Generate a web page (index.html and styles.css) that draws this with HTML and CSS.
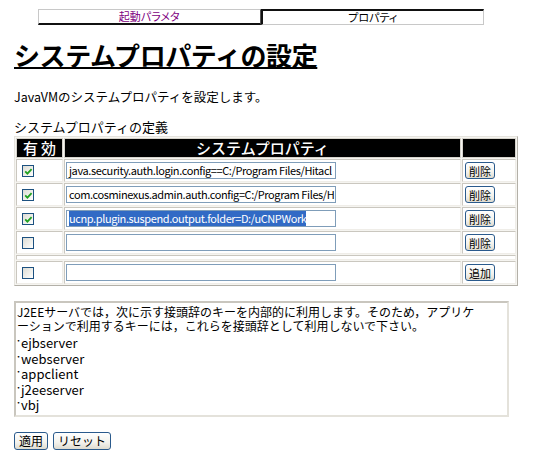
FILE: index.html
```html
<!DOCTYPE html>
<html lang="ja">
<head>
<meta charset="utf-8">
<title>システムプロパティの設定</title>
<link rel="stylesheet" href="styles.css">
</head>
<body>
<div class="page">
  <div class="tabs">
    <div class="tab tab-off">起動パラメタ</div>
    <div class="tab tab-on">プロパティ</div>
  </div>

  <h1 class="title"><span>システムプロパティの設定</span></h1>

  <p class="lead">JavaVMのシステムプロパティを設定します。</p>

  <div class="caption">システムプロパティの定義</div>

  <table class="props">
    <thead>
      <tr>
        <th class="c1 h-valid">有効</th>
        <th class="c2">システムプロパティ</th>
        <th class="c3"></th>
      </tr>
    </thead>
    <tbody>
      <tr>
        <td class="c1"><span class="cb"><svg viewBox="0 0 11 11" width="11" height="11"><path d="M2.2 5.4 L4.4 7.6 L8.6 3.2" fill="none" stroke="#21a121" stroke-width="1.8"/></svg></span></td>
        <td class="c2"><div class="inp">java.security.auth.login.config==C:/Program Files/Hitacl</div></td>
        <td class="c3"><button class="btn">削除</button></td>
      </tr>
      <tr>
        <td class="c1"><span class="cb"><svg viewBox="0 0 11 11" width="11" height="11"><path d="M2.2 5.4 L4.4 7.6 L8.6 3.2" fill="none" stroke="#21a121" stroke-width="1.8"/></svg></span></td>
        <td class="c2"><div class="inp">com.cosminexus.admin.auth.config=C:/Program Files/H</div></td>
        <td class="c3"><button class="btn">削除</button></td>
      </tr>
      <tr>
        <td class="c1"><span class="cb"><svg viewBox="0 0 11 11" width="11" height="11"><path d="M2.2 5.4 L4.4 7.6 L8.6 3.2" fill="none" stroke="#21a121" stroke-width="1.8"/></svg></span></td>
        <td class="c2"><div class="inp"><span class="sel">ucnp.plugin.suspend.output.folder=D:/uCNPWork</span></div></td>
        <td class="c3"><button class="btn">削除</button></td>
      </tr>
      <tr>
        <td class="c1"><span class="cb"></span></td>
        <td class="c2"><div class="inp"></div></td>
        <td class="c3"><button class="btn">削除</button></td>
      </tr>
      <tr class="sep">
        <td colspan="3"></td>
      </tr>
      <tr>
        <td class="c1"><span class="cb"></span></td>
        <td class="c2"><div class="inp"></div></td>
        <td class="c3"><button class="btn">追加</button></td>
      </tr>
    </tbody>
  </table>

  <div class="note">
    <p class="note-text">J2EEサーバでは，次に示す接頭辞のキーを内部的に利用します。そのため，アプリケ<br>ーションで利用するキーには，これらを接頭辞として利用しないで下さい。</p>
    <ul class="keys">
      <li><span class="dot">･</span>ejbserver</li>
      <li><span class="dot">･</span>webserver</li>
      <li><span class="dot">･</span>appclient</li>
      <li><span class="dot">･</span>j2eeserver</li>
      <li><span class="dot">･</span>vbj</li>
    </ul>
  </div>

  <div class="actions">
    <button class="btn btn-lg">適用</button>
    <button class="btn btn-lg">リセット</button>
  </div>
</div>
</body>
</html>
```

FILE: styles.css
```css
body {
  margin: 0;
  background: #fff;
  color: #000;
  font-family: "Noto Sans CJK JP", "Liberation Sans", sans-serif;
  font-size: 13px;
}

.page {
  width: 494px;
  margin-left: 14px;
  padding-top: 9px;
}

/* tabs */
.tabs {
  display: flex;
  width: 446px;
  margin: 0 auto;
}
.tab {
  flex: 1;
  box-sizing: border-box;
  height: 16px;
  font-size: 11px;
  line-height: 13px;
  text-align: center;
  font-feature-settings: "palt";
  border-style: solid;
}
.tab-off {
  border-width: 1px 1px 2px 1px;
  border-color: #c8c8c8 #555 #111 #c8c8c8;
  color: #800080;
}
.tab-on {
  border-width: 2px 1px 1px 2px;
  border-color: #111 #c8c8c8 #c8c8c8 #111;
  color: #000;
}

/* heading */
.title {
  margin: 15px 0 0;
  font-size: 26px;
  font-weight: bold;
  line-height: 29px;
  letter-spacing: -0.4px;
}
.title span {
  text-decoration: underline;
  text-decoration-thickness: 2px;
  text-underline-offset: 1px;
}

.lead {
  margin: 20px 0 0;
  font-size: 12.5px;
  line-height: 16px;
}
.caption {
  margin-top: 14px;
  line-height: 16px;
}

/* table */
.props {
  margin-top: 1px;
  width: 504px;
  table-layout: fixed;
  border-collapse: separate;
  border-spacing: 1px;
  border: 1px solid;
  border-color: #e6e4de #b3b0a8 #b3b0a8 #e6e4de;
  background: #f5f4f0;
}
.props th,
.props td {
  box-sizing: border-box;
  padding: 0;
}
.props .c1 { width: 47px; }
.props .c2 { width: 397px; }
.props .c3 { width: 54px; }

.props th {
  height: 20px;
  background: #000;
  color: #fff;
  font-size: 15px;
  font-weight: 500;
  line-height: 18px;
  text-align: center;
  border: 1px solid #d6d3cb;
}
.props th.h-valid {
  letter-spacing: 3px;
  text-indent: 3px;
}

.props td {
  height: 23px;
  background: #fff;
  vertical-align: middle;
  border: 1px solid;
  border-color: #cac7bf #efede8 #efede8 #cac7bf;
}
.props td.c1 { padding-left: 5px; }
.props td.c2 { padding-left: 1px; }
.props td.c3 { padding-left: 2px; }

.props tr.sep td {
  height: 5px;
  font-size: 0;
  line-height: 0;
}

.cb {
  display: block;
  box-sizing: border-box;
  width: 12px;
  height: 12px;
  border: 1px solid #1c5180;
  background: linear-gradient(135deg, #dcdcd5 0%, #f4f4f0 70%, #fff 100%);
  line-height: 0;
}
.cb svg { display: block; }

.inp {
  box-sizing: border-box;
  width: 270px;
  height: 17px;
  border: 1px solid #7f9db9;
  padding: 0 2px;
  font-size: 11px;
  letter-spacing: -0.4px;
  line-height: 15px;
  white-space: nowrap;
  overflow: hidden;
  background: #fff;
}
.sel {
  background: #316ac5;
  color: #fff;
}

.btn {
  box-sizing: border-box;
  height: 17px;
  margin: 0;
  padding: 0 3px;
  border: 1px solid #2a5a8c;
  border-radius: 3px;
  background: linear-gradient(#ffffff, #f3f2ec 60%, #dedbd0);
  color: #000;
  font-family: "Noto Sans CJK JP", "Liberation Sans", sans-serif;
  font-size: 11px;
  line-height: 14px;
  display: block;
}

/* note box */
.note {
  margin-top: 15px;
  box-sizing: border-box;
  width: 495px;
  border: 2px solid;
  border-color: #c9c6be #e4e2db #e4e2db #c9c6be;
  padding: 2px 2px 2px 1px;
}
.note-text {
  margin: 0;
  font-size: 12px;
  line-height: 13.5px;
}
.keys {
  list-style: none;
  margin: 3px 0 0;
  padding: 0;
}
.keys li {
  line-height: 15.5px;
}
.dot {
  vertical-align: 3px;
  font-size: 10px;
  line-height: 10px;
  margin-left: -1px;
}

.actions {
  margin-top: 15px;
  display: flex;
  gap: 5px;
}
.btn-lg {
  height: 18px;
  padding: 0 4px;
  font-size: 12px;
}
```
